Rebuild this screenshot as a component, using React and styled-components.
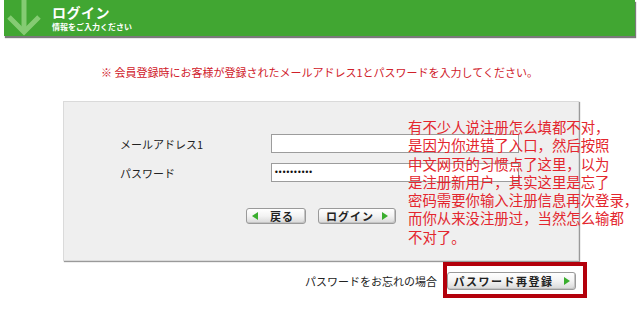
import React from "react";
import styled, { createGlobalStyle } from "styled-components";

const GlobalStyle = createGlobalStyle`
  body {
    margin: 0;
    background: #fff;
    font-family: "Noto Sans CJK JP", "Liberation Sans", sans-serif;
  }
`;

const Page = styled.div`
  position: relative;
  width: 639px;
  height: 313px;
  overflow: hidden;
`;

const Header = styled.div`
  margin-left: 4px;
  width: 631px;
  height: 36px;
  background: #41a632;
  box-shadow: 1px 2px 1px #7a7a7a;
  display: flex;
  align-items: center;
  gap: 11px;
  padding-left: 3px;
  box-sizing: border-box;
`;

const HeaderText = styled.div`
  display: flex;
  flex-direction: column;
  gap: 2px;
  color: #fff;
`;

const Title = styled.div`
  font-size: 14px;
  font-weight: 700;
  line-height: 15px;
  height: 15px;
  letter-spacing: 0.5px;
`;

const Subtitle = styled.div`
  font-size: 8px;
  font-weight: 700;
  line-height: 9px;
  height: 9px;
`;

const Notice = styled.p`
  margin: 29px 0 0;
  text-align: center;
  color: #d0202a;
  font-size: 11px;
  line-height: 14px;
`;

const Panel = styled.div`
  margin: 22px 0 0 63px;
  width: 516px;
  height: 160px;
  box-sizing: border-box;
  background: #efefef;
  border: 1px solid #dadada;
  box-shadow: 1px 1px 1px #9a9a9a;
  padding-top: 32px;
`;

const FieldRow = styled.div`
  display: flex;
  align-items: center;
  height: 19px;
  margin-bottom: ${(p) => p.gap || 0}px;
`;

const Label = styled.label`
  width: 151px;
  padding-left: 56px;
  font-size: 11px;
  color: #222;
`;

const Input = styled.div`
  width: 248px;
  height: 19px;
  box-sizing: border-box;
  background: #fff;
  border: 1px solid #9c9c9c;
  font-size: 8px;
  line-height: 17px;
  padding-left: 2px;
  letter-spacing: -0.9px;
  color: #111;
  font-family: "DejaVu Sans", sans-serif;
`;

const Buttons = styled.div`
  display: flex;
  justify-content: center;
  gap: 12px;
  margin-top: 26px;
`;

const Button = styled.button`
  display: flex;
  align-items: center;
  justify-content: ${(p) => (p.back ? "flex-start" : "center")};
  gap: ${(p) => p.gap || 6}px;
  width: ${(p) => p.w}px;
  height: ${(p) => p.h || 16}px;
  padding: 0 5px;
  box-sizing: border-box;
  border: 1px solid #9a9a9a;
  border-radius: 3px;
  background: linear-gradient(#ffffff, #f3f3f3 50%, #d8d8d8);
  box-shadow: inset -1px -1px 0 #c4c4c4;
  font-family: "Noto Sans CJK JP", sans-serif;
  font-size: 11px;
  font-weight: 700;
  letter-spacing: ${(p) => p.ls || 1}px;
  color: #222;
  cursor: pointer;
`;

const Tri = styled.span`
  width: 0;
  height: 0;
  border-top: 4px solid transparent;
  border-bottom: 4px solid transparent;
  ${(p) =>
    p.left
      ? "border-right: 6px solid #3aae2e;"
      : "border-left: 6px solid #3aae2e;"}
`;

const ForgotRow = styled.div`
  display: flex;
  justify-content: flex-end;
  align-items: center;
  gap: 10px;
  width: 576px;
  margin-top: 11px;
  font-size: 11px;
  color: #222;
`;

const Annotation = styled.div`
  position: absolute;
  left: 408px;
  top: 118px;
  color: #e3262e;
  font-family: "Noto Sans CJK SC", sans-serif;
  font-size: 14.4px;
  line-height: 18.3px;
  white-space: pre;
`;

const Highlight = styled.div`
  position: absolute;
  left: 443px;
  top: 262px;
  width: 144px;
  height: 36px;
  box-sizing: border-box;
  border: 4px solid #b3000b;
`;

function Arrow() {
  return (
    <svg width="34" height="36" viewBox="0 0 34 36">
      <g stroke="#92d27f" strokeWidth="5" fill="none" opacity="0.85">
        <line x1="17" y1="0" x2="17" y2="31" />
        <polyline points="2,17 17,32 32,17" />
      </g>
    </svg>
  );
}

const note =
  "有不少人说注册怎么填都不对，\n是因为你进错了入口，然后按照\n中文网页的习惯点了这里，以为\n是注册新用户，其实这里是忘了\n密码需要你输入注册信息再次登录，\n而你从来没注册过，当然怎么输都\n不对了。";

export default function App() {
  return (
    <Page>
      <GlobalStyle />
      <Header>
        <Arrow />
        <HeaderText>
          <Title>ログイン</Title>
          <Subtitle>情報をご入力ください</Subtitle>
        </HeaderText>
      </Header>
      <Notice>
        ※ 会員登録時にお客様が登録されたメールアドレス1とパスワードを入力してください。
      </Notice>
      <Panel>
        <FieldRow gap={10}>
          <Label>メールアドレス1</Label>
          <Input />
        </FieldRow>
        <FieldRow>
          <Label>パスワード</Label>
          <Input>••••••••••</Input>
        </FieldRow>
        <Buttons>
          <Button w={60} back gap={12}>
            <Tri left />
            戻る
          </Button>
          <Button w={78} gap={8}>
            ログイン
            <Tri />
          </Button>
        </Buttons>
      </Panel>
      <ForgotRow>
        パスワードをお忘れの場合
        <Button w={129} h={18} gap={10} ls={1.5}>
          パスワード再登録
          <Tri />
        </Button>
      </ForgotRow>
      <Annotation>{note}</Annotation>
      <Highlight />
    </Page>
  );
}
